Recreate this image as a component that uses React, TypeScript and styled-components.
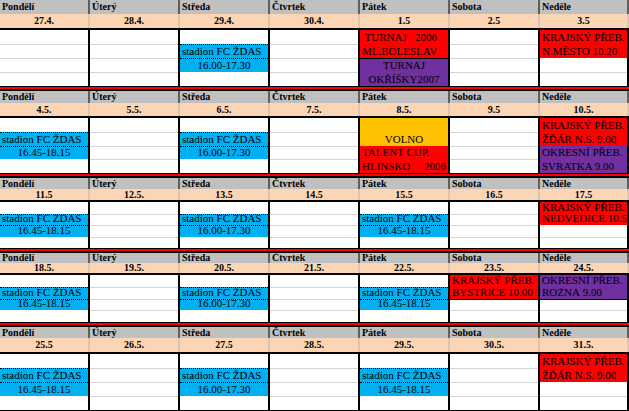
import React from "react";
import styled, { createGlobalStyle } from "styled-components";

const GlobalStyle = createGlobalStyle`
  html, body {
    margin: 0;
    padding: 0;
    background: #fff;
  }
  body {
    font-family: "Liberation Serif", "Times New Roman", serif;
    color: #000;
  }
`;

const BLUE = "#00b0f0";
const RED = "#ff0000";
const PURPLE = "#7030a0";
const ORANGE = "#ffc000";

const COLS = "repeat(6, 90px) 89px";

const Sheet = styled.div`
  width: 629px;
  height: 411px;
  overflow: hidden;
  display: flex;
  flex-direction: column;
`;

const WeekBlock = styled.section`
  display: flex;
  flex-direction: column;
`;

const HeadRow = styled.div<{ $h: number }>`
  display: grid;
  grid-template-columns: ${COLS};
  height: ${(p) => p.$h}px;
  background: #c0c0c0;
`;

const HeadCell = styled.div`
  box-sizing: border-box;
  border-right: 2px solid #5f5f5f;
  padding-left: 2px;
  font-size: 10px;
  font-weight: bold;
  line-height: 1;
  display: flex;
  align-items: center;
  white-space: nowrap;
`;

const DateRow = styled.div<{ $h: number }>`
  display: grid;
  grid-template-columns: ${COLS};
  height: ${(p) => p.$h}px;
  background: #fcd5b4;
  border-bottom: 2px solid #000;
`;

const DateCell = styled.div`
  box-sizing: border-box;
  border-right: 2px solid #dcc6b3;
  font-size: 10px;
  font-weight: bold;
  line-height: 1;
  display: flex;
  align-items: center;
  justify-content: center;
`;

const Body = styled.div<{ $h: number }>`
  display: grid;
  grid-template-columns: ${COLS};
  height: ${(p) => p.$h}px;
`;

const DayCol = styled.div`
  box-sizing: border-box;
  border-right: 2px solid #000;
  display: grid;
  grid-template-rows: repeat(4, 1fr);
  min-height: 0;
`;

const Slot = styled.div<{ $fill?: string; $line: string; $align: string }>`
  box-sizing: border-box;
  min-height: 0;
  background: ${(p) => p.$fill || "#fff"};
  border-top: ${(p) => p.$line};
  display: flex;
  align-items: flex-end;
  justify-content: ${(p) => (p.$align === "center" ? "center" : "flex-start")};
  padding: 0 2px 1px 2px;
  font-size: 11px;
  line-height: 1;
  white-space: pre;
  overflow: hidden;
`;

const Separator = styled.div`
  height: 2px;
  background: #ff0000;
  border-top: 1px solid #000;
  border-bottom: 2px solid #000;
`;

const BottomLine = styled.div`
  height: 1px;
  background: #000;
`;

type Row = {
  fill?: string;
  text?: string;
  align?: "left" | "center";
  top?: "dotted" | "solid";
};

type Day = { date: string; rows?: Row[] };

type Week = {
  head: number;
  date: number;
  body: number;
  days: Day[];
  last?: boolean;
};

const names = ["Pondělí", "Úterý", "Středa", "Čtvrtek", "Pátek", "Sobota", "Neděle"];

const training = (time: string): Row[] => [
  {},
  { fill: BLUE, text: "stadion FC ŽDAS", top: "dotted" },
  { fill: BLUE, text: time, align: "center", top: "dotted" },
  {},
];

const match = (fill: string, a: string, b: string, closed?: boolean): Row[] => [
  { fill, text: a },
  { fill, text: b },
  closed ? { top: "solid" } : {},
  {},
];

const weeks: Week[] = [
  {
    head: 14,
    date: 14,
    body: 56,
    days: [
      { date: "27.4." },
      { date: "28.4." },
      { date: "29.4.", rows: training("16.00-17.30") },
      { date: "30.4." },
      {
        date: "1.5",
        rows: [
          { fill: RED, text: " TURNAJ   2006" },
          { fill: RED, text: "ML.BOLESLAV" },
          { fill: PURPLE, text: "TURNAJ", align: "center", top: "solid" },
          { fill: PURPLE, text: "OKŘÍŠKY2007", align: "center" },
        ],
      },
      { date: "2.5" },
      { date: "3.5", rows: match(RED, "KRAJSKÝ PŘEB.", "N.MĚSTO 10.20") },
    ],
  },
  {
    head: 12,
    date: 13,
    body: 55,
    days: [
      { date: "4.5.", rows: training("16.45-18.15") },
      { date: "5.5." },
      { date: "6.5.", rows: training("16.00-17.30") },
      { date: "7.5." },
      {
        date: "8.5.",
        rows: [
          { fill: ORANGE },
          { fill: ORANGE, text: "VOLNO", align: "center" },
          { fill: RED, text: "TALENT CUP." },
          { fill: RED, text: "HLINSKO     2006" },
        ],
      },
      { date: "9.5" },
      {
        date: "10.5.",
        rows: [
          { fill: RED, text: "KRAJSKÝ PŘEB." },
          { fill: RED, text: "ŽĎÁR N.S. 9.00" },
          { fill: PURPLE, text: "OKRESNÍ PŘEB." },
          { fill: PURPLE, text: "SVRATKA 9.00" },
        ],
      },
    ],
  },
  {
    head: 11,
    date: 11,
    body: 46,
    days: [
      { date: "11.5", rows: training("16.45-18.15") },
      { date: "12.5." },
      { date: "13.5", rows: training("16.00-17.30") },
      { date: "14.5" },
      { date: "15.5", rows: training("16.45-18.15") },
      { date: "16.5" },
      { date: "17.5", rows: match(RED, "KRAJSKÝ PŘEB.", "NEDVĚDICE 10.5") },
    ],
  },
  {
    head: 10,
    date: 10,
    body: 47,
    days: [
      { date: "18.5.", rows: training("16.45-18.15") },
      { date: "19.5." },
      { date: "20.5.", rows: training("16.00-17.30") },
      { date: "21.5." },
      { date: "22.5.", rows: training("16.45-18.15") },
      { date: "23.5.", rows: match(RED, "KRAJSKÝ PŘEB.", "BYSTŘICE 10.00", true) },
      { date: "24.5.", rows: match(PURPLE, "OKRESNÍ PŘEB.", "ROŽNÁ 9.00", true) },
    ],
  },
  {
    head: 11,
    date: 14,
    body: 56,
    last: true,
    days: [
      { date: "25.5", rows: training("16.45-18.15") },
      { date: "26.5." },
      { date: "27.5", rows: training("16.00-17.30") },
      { date: "28.5." },
      { date: "29.5.", rows: training("16.45-18.15") },
      { date: "30.5." },
      { date: "31.5.", rows: match(RED, "KRAJSKÝ PŘEB.", "ŽĎÁR N.S. 9.00") },
    ],
  },
];

const emptyRows: Row[] = [{}, {}, {}, {}];

const lineFor = (rows: Row[], j: number) => {
  if (j === 0) return "none";
  const r = rows[j];
  if (r.top) return `1px ${r.top} #000`;
  if (!r.fill && !rows[j - 1].fill) return "1px solid #d6d6d6";
  return "1px solid transparent";
};

export default function App() {
  return (
    <>
      <GlobalStyle />
      <Sheet>
        {weeks.map((w, i) => (
          <WeekBlock key={i}>
            <HeadRow $h={w.head}>
              {names.map((n) => (
                <HeadCell key={n}>{n}</HeadCell>
              ))}
            </HeadRow>
            <DateRow $h={w.date}>
              {w.days.map((d) => (
                <DateCell key={d.date}>{d.date}</DateCell>
              ))}
            </DateRow>
            <Body $h={w.body}>
              {w.days.map((d) => {
                const rows = d.rows || emptyRows;
                return (
                  <DayCol key={d.date}>
                    {rows.map((r, j) => (
                      <Slot
                        key={j}
                        $fill={r.fill}
                        $line={lineFor(rows, j)}
                        $align={r.align || "left"}
                      >
                        {r.text}
                      </Slot>
                    ))}
                  </DayCol>
                );
              })}
            </Body>
            {w.last ? <BottomLine /> : <Separator />}
          </WeekBlock>
        ))}
      </Sheet>
    </>
  );
}
